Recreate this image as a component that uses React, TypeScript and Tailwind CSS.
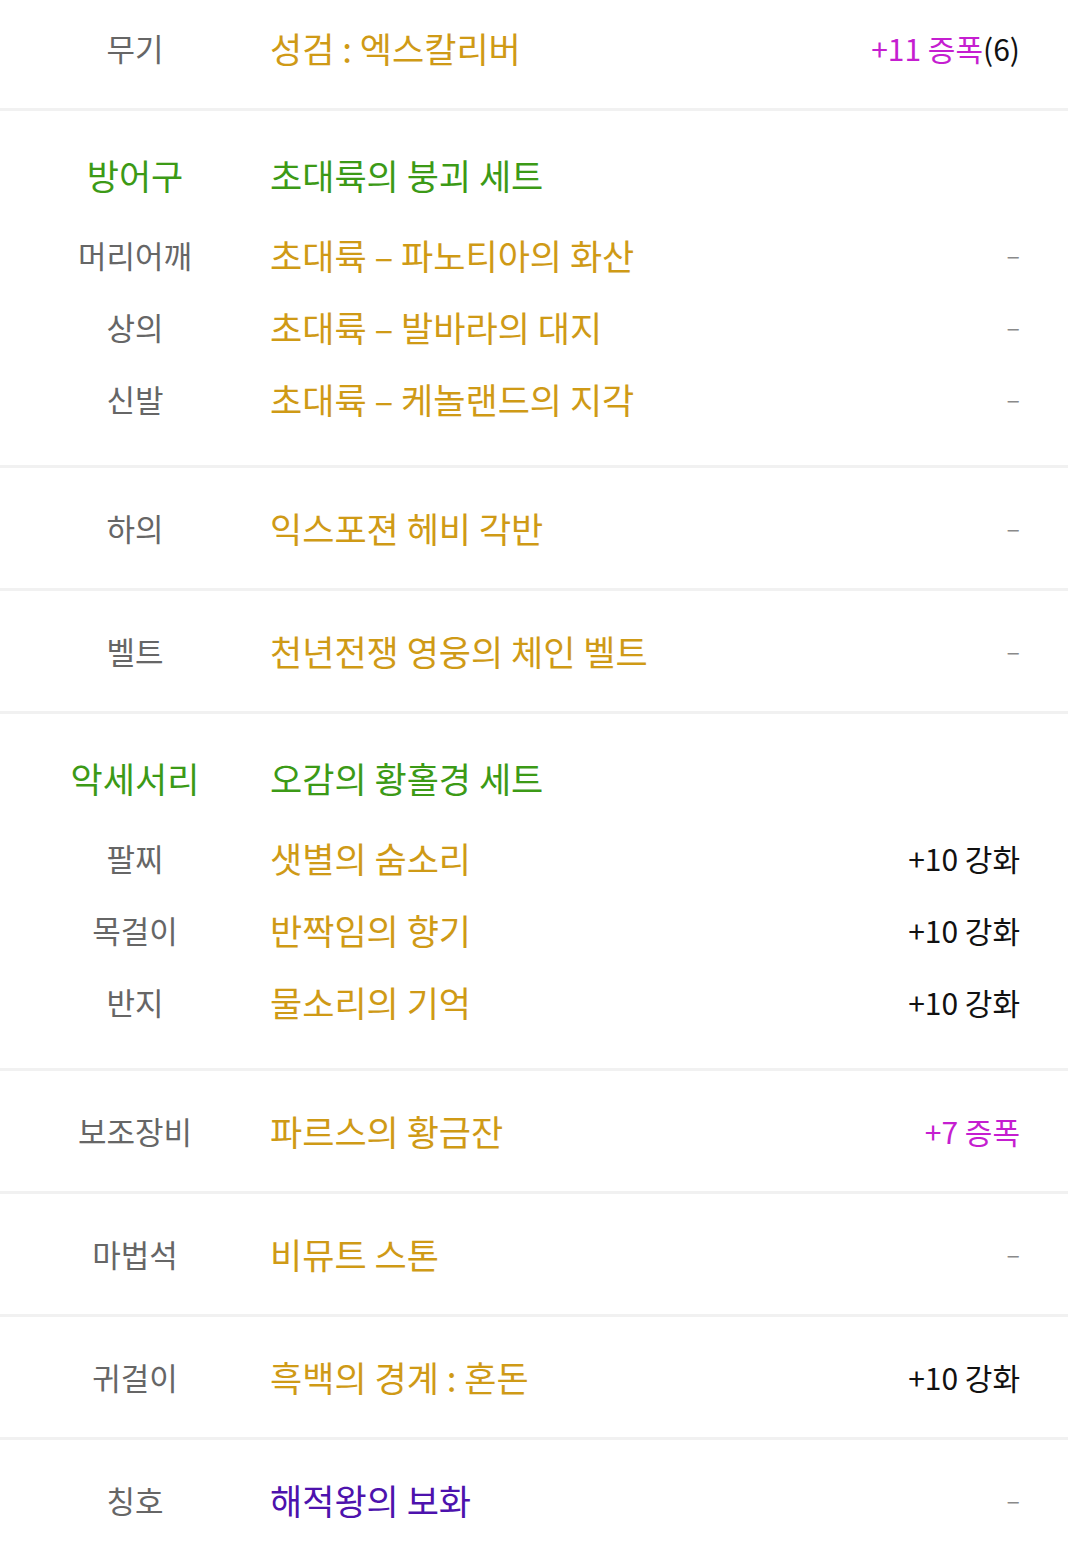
import React from 'react';

type Row = {
  label: string;
  value: string;
  right?: React.ReactNode;
  header?: boolean;
  valueColor?: string;
};

type Section = { rows: Row[]; first?: boolean };

const dash = <span className="inline-block -translate-y-[3px] text-[25px] text-[#8a8a8a]">–</span>;
const enhance = <span className="text-[#111]">+10 강화</span>;

const sections: Section[] = [
  {
    first: true,
    rows: [
      {
        label: '무기',
        value: '성검 : 엑스칼리버',
        right: (
          <span>
            <span className="text-[#c51ed0]">+11 증폭</span>
            <span className="text-[#111]">(6)</span>
          </span>
        ),
      },
    ],
  },
  {
    rows: [
      { label: '방어구', value: '초대륙의 붕괴 세트', header: true },
      { label: '머리어깨', value: '초대륙 – 파노티아의 화산', right: dash },
      { label: '상의', value: '초대륙 – 발바라의 대지', right: dash },
      { label: '신발', value: '초대륙 – 케놀랜드의 지각', right: dash },
    ],
  },
  { rows: [{ label: '하의', value: '익스포젼 헤비 각반', right: dash }] },
  { rows: [{ label: '벨트', value: '천년전쟁 영웅의 체인 벨트', right: dash }] },
  {
    rows: [
      { label: '악세서리', value: '오감의 황홀경 세트', header: true },
      { label: '팔찌', value: '샛별의 숨소리', right: enhance },
      { label: '목걸이', value: '반짝임의 향기', right: enhance },
      { label: '반지', value: '물소리의 기억', right: enhance },
    ],
  },
  {
    rows: [
      {
        label: '보조장비',
        value: '파르스의 황금잔',
        right: <span className="text-[#c51ed0]">+7 증폭</span>,
      },
    ],
  },
  { rows: [{ label: '마법석', value: '비뮤트 스톤', right: dash }] },
  { rows: [{ label: '귀걸이', value: '흑백의 경계 : 혼돈', right: enhance }] },
  { rows: [{ label: '칭호', value: '해적왕의 보화', right: dash, valueColor: 'text-[#4d12ad]' }] },
];

function EquipRow({ row }: { row: Row }) {
  if (row.header) {
    return (
      <div className="flex items-center h-[72px] mb-2">
        <div className="w-[270px] shrink-0 text-center text-[35px] text-[#3c9a16]">{row.label}</div>
        <div className="flex-1 text-[35px] text-[#3c9a16]">{row.value}</div>
      </div>
    );
  }
  return (
    <div className="flex items-center h-[72px]">
      <div className="w-[270px] shrink-0 text-center text-[31px] text-[#666]">{row.label}</div>
      <div className={`flex-1 text-[35px] ${row.valueColor ?? 'text-[#cf9a16]'}`}>{row.value}</div>
      <div className="text-[30px] text-right">{row.right}</div>
    </div>
  );
}

export default function App() {
  return (
    <div
      className="w-[1068px] bg-white"
      style={{ fontFamily: '"Noto Sans CJK KR", "Noto Sans", sans-serif' }}
    >
      {sections.map((s, i) => {
        const multi = s.rows.length > 1;
        const pad = s.first ? 'pt-[12px] pb-[24px]' : multi ? 'pt-[28px] pb-[30px]' : 'py-[24px]';
        const last = i === sections.length - 1;
        return (
          <div
            key={i}
            className={`${pad} ${last ? '' : 'border-b-[3px] border-[#f1f1f1]'} pr-[48px]`}
          >
            {s.rows.map((r, j) => (
              <EquipRow key={j} row={r} />
            ))}
          </div>
        );
      })}
    </div>
  );
}
